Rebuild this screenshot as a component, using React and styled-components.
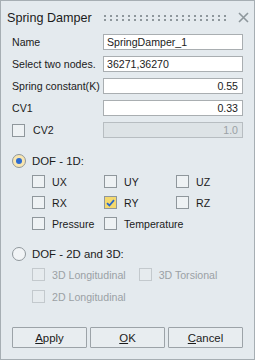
import React from "react";
import styled, { createGlobalStyle } from "styled-components";

const GlobalStyle = createGlobalStyle`
  html, body {
    margin: 0;
    padding: 0;
    background: #e4eaee;
  }
  * {
    box-sizing: border-box;
  }
`;

const Window = styled.div`
  width: 255px;
  height: 360px;
  background: #e4eaee;
  border: 1px solid #a6aeb3;
  font-family: "Liberation Sans", Arial, sans-serif;
  font-size: 10.6px;
  color: #1b1b1b;
  display: flex;
  flex-direction: column;
`;

const TitleBar = styled.div`
  height: 33px;
  display: flex;
  align-items: center;
  padding: 0 5px 0 6px;
  gap: 10px;
`;

const Title = styled.div`
  font-size: 12.6px;
  color: #1b1b1b;
  white-space: nowrap;
`;

const Grip = styled.div`
  flex: 1;
  height: 8px;
  background-image: radial-gradient(circle, #8e979c 0.9px, transparent 1.2px);
  background-size: 6px 4px;
  background-position: 0 0;
`;

const CloseBtn = styled.div`
  width: 12px;
  height: 12px;
  display: flex;
  align-items: center;
  justify-content: center;
`;

const Body = styled.div`
  flex: 1;
  display: flex;
  flex-direction: column;
  padding: 0 10px 0 11px;
`;

const FieldRow = styled.div`
  display: grid;
  grid-template-columns: 91px 140px;
  align-items: center;
  height: 16px;
  margin-bottom: 6px;
`;

const Label = styled.span`
  color: ${(p) => (p.$disabled ? "#9ba1a5" : "#1b1b1b")};
  white-space: nowrap;
  line-height: 12px;
`;

const Input = styled.div`
  height: 16px;
  border: 1px solid ${(p) => (p.$disabled ? "#b7bdc1" : "#a9aeb1")};
  background: ${(p) => (p.$disabled ? "#dde3e6" : "#ffffff")};
  color: ${(p) => (p.$disabled ? "#9ba1a5" : "#1b1b1b")};
  padding: 0 4px 0 3px;
  display: flex;
  align-items: center;
  justify-content: ${(p) => (p.$right ? "flex-end" : "flex-start")};
  white-space: nowrap;
`;

const CheckInline = styled.div`
  display: flex;
  align-items: center;
  gap: ${(p) => p.$gap || 7}px;
`;

const Box = styled.span`
  width: 13px;
  height: 13px;
  flex: none;
  border: 1px solid ${(p) => (p.$disabled ? "#c3c9cd" : "#8f979c")};
  background: ${(p) => (p.$checked ? "#f4d96e" : p.$disabled ? "#e6ebee" : "#eef2f4")};
  display: flex;
  align-items: center;
  justify-content: center;
`;

const RadioRow = styled.div`
  display: flex;
  align-items: center;
  gap: 6px;
  height: 14px;
  margin-top: ${(p) => p.$top}px;
`;

const RadioCircle = styled.span`
  width: 14px;
  height: 14px;
  border-radius: 50%;
  border: 1px solid #8f979c;
  background: ${(p) => (p.$checked ? "#f8e6b0" : "#f1f4f6")};
  display: flex;
  align-items: center;
  justify-content: center;
  &::after {
    content: "";
    display: ${(p) => (p.$checked ? "block" : "none")};
    width: 6px;
    height: 6px;
    border-radius: 50%;
    background: #2d6bd0;
  }
`;

const RadioText = styled.span`
  font-size: 11.4px;
  line-height: 14px;
`;

const OptionGrid = styled.div`
  display: grid;
  grid-template-columns: 72px 72px 72px;
  row-gap: 8px;
  padding-left: 20px;
  margin-top: ${(p) => p.$top}px;
`;

const OptionFlow = styled.div`
  display: flex;
  flex-wrap: wrap;
  column-gap: 13px;
  row-gap: 9px;
  width: 232px;
  padding-left: 20px;
  margin-top: ${(p) => p.$top}px;
`;

const Buttons = styled.div`
  display: flex;
  gap: 3px;
  margin-top: auto;
  margin-bottom: 11px;
`;

const Button = styled.button`
  width: 75px;
  height: 21px;
  border: 1px solid #9ca3a8;
  border-radius: 1px;
  background: #e8edf0;
  font-family: "Liberation Sans", Arial, sans-serif;
  font-size: 11.4px;
  color: #1b1b1b;
  padding: 0;
  u {
    text-decoration: underline;
    text-underline-offset: 1px;
  }
`;

const Check = () => (
  <svg width="9" height="8" viewBox="0 0 9 8">
    <path d="M1 4.2 L3.4 6.5 L8 1.2" fill="none" stroke="#2a67c8" strokeWidth="1.8" />
  </svg>
);

const CheckOption = ({ label, checked, disabled, gap }) => (
  <CheckInline $gap={gap}>
    <Box $checked={checked} $disabled={disabled}>
      {checked && <Check />}
    </Box>
    <Label $disabled={disabled}>{label}</Label>
  </CheckInline>
);

const fields = [
  { label: "Name", value: "SpringDamper_1" },
  { label: "Select two nodes.", value: "36271,36270" },
  { label: "Spring constant(K)", value: "0.55", right: true },
  { label: "CV1", value: "0.33", right: true },
];

const dof1 = [
  { label: "UX" },
  { label: "UY" },
  { label: "UZ" },
  { label: "RX" },
  { label: "RY", checked: true },
  { label: "RZ" },
  { label: "Pressure" },
  { label: "Temperature" },
];

export default function App() {
  return (
    <>
      <GlobalStyle />
      <Window>
        <TitleBar>
          <Title>Spring Damper</Title>
          <Grip />
          <CloseBtn>
            <svg width="11" height="11" viewBox="0 0 11 11">
              <path d="M1 1 L10 10 M10 1 L1 10" stroke="#8e979c" strokeWidth="1.6" />
            </svg>
          </CloseBtn>
        </TitleBar>
        <Body>
          {fields.map((f) => (
            <FieldRow key={f.label}>
              <Label>{f.label}</Label>
              <Input $right={f.right}>{f.value}</Input>
            </FieldRow>
          ))}
          <FieldRow>
            <CheckOption label="CV2" gap={8} />
            <Input $right $disabled>
              1.0
            </Input>
          </FieldRow>

          <RadioRow $top={10}>
            <RadioCircle $checked />
            <RadioText>DOF - 1D:</RadioText>
          </RadioRow>
          <OptionGrid $top={7}>
            {dof1.map((o) => (
              <CheckOption key={o.label} label={o.label} checked={o.checked} />
            ))}
          </OptionGrid>

          <RadioRow $top={17}>
            <RadioCircle />
            <RadioText>DOF - 2D and 3D:</RadioText>
          </RadioRow>
          <OptionFlow $top={7}>
            <CheckOption label="3D Longitudinal" disabled />
            <CheckOption label="3D Torsional" disabled />
            <CheckOption label="2D Longitudinal" disabled />
          </OptionFlow>

          <Buttons>
            <Button>
              <u>A</u>pply
            </Button>
            <Button>
              <u>O</u>K
            </Button>
            <Button>
              <u>C</u>ancel
            </Button>
          </Buttons>
        </Body>
      </Window>
    </>
  );
}
